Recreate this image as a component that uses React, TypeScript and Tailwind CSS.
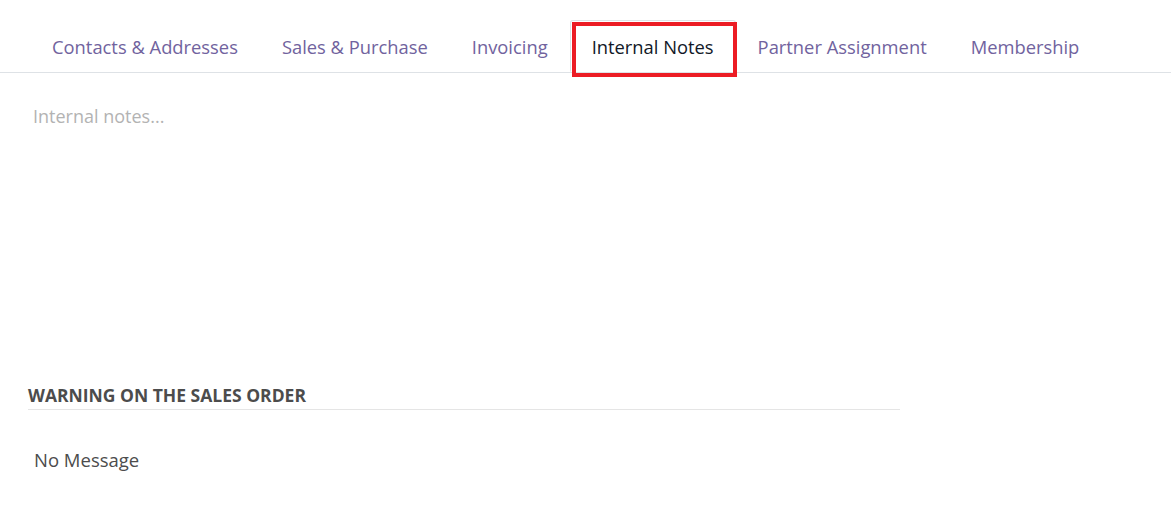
const TABS = ["Contacts & Addresses", "Sales & Purchase", "Invoicing", "Internal Notes", "Partner Assignment", "Membership"];
const ACTIVE = "Internal Notes";

export default function App() {
  return (
    <div className="w-[1171px] h-[522px] bg-white overflow-hidden" style={{ fontFamily: '"Open Sans", "Noto Sans", sans-serif' }}>
      <div className="pt-[20px] border-b border-[#dee2e6] flex pl-[30px]">
        {TABS.map((t) =>
          t === ACTIVE ? (
            <div key={t} className="relative -mb-px h-[52px] px-[21px] pt-[2px] flex items-center bg-white border border-[#dee2e6] border-b-white rounded-t-[3px] text-[18.35px] text-[#111827]">
              {t}
              <div className="absolute left-[1px] -right-[2px] top-[1px] h-[55px] border-[4px] border-[#ec1c24]" />
            </div>
          ) : (
            <div key={t} className="h-[52px] px-[21px] pt-[2px] flex items-center border border-transparent text-[18.35px] text-[#71639e]">
              {t}
            </div>
          )
        )}
      </div>
      <div className="pl-[33px] pt-[30px] h-[310px] text-[18px] text-[#b3b3b3]">Internal notes...</div>
      <div className="ml-[28px] w-[872px]">
        <div className="pb-[2px] border-b border-[#e5e5e5] text-[17.5px] font-bold text-[#4c4c4c] leading-[24px]">WARNING ON THE SALES ORDER</div>
        <div className="pl-[6px] pt-[36px] text-[18.5px] text-[#4c4c4c]">No Message</div>
      </div>
    </div>
  );
}
